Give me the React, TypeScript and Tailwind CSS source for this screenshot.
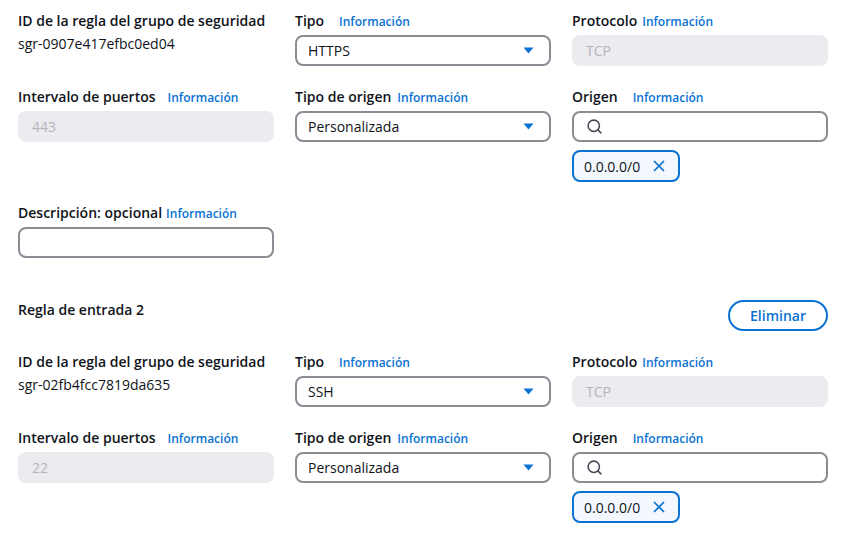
import { Search, X } from "lucide-react";

type LabelProps = { text: string; gap?: string };

function Label({ text, gap = "ml-2" }: LabelProps) {
  return (
    <div className="flex h-[22px] items-baseline">
      <span className="text-[14px] font-semibold leading-[22px] text-[#0f141a]">{text}</span>
      <span className={`${gap} text-[12px] font-semibold leading-[22px] text-[#0972d3]`}>Información</span>
    </div>
  );
}

function Caret() {
  return (
    <svg width="11" height="7" viewBox="0 0 11 7" className="text-[#0972d3]">
      <path d="M0.5 0.5 L10.5 0.5 L5.5 6.5 Z" fill="currentColor" />
    </svg>
  );
}

function Select({ value }: { value: string }) {
  return (
    <div className="mt-[3px] flex h-[31px] items-center justify-between rounded-lg border-2 border-[#8c8c94] bg-white pl-[11px] pr-[15px]">
      <span className="text-[14px] text-[#0f141a]">{value}</span>
      <Caret />
    </div>
  );
}

function Disabled({ value }: { value: string }) {
  return (
    <div className="mt-[3px] flex h-[31px] items-center rounded-lg bg-[#ebebf0] px-[14px]">
      <span className="text-[14px] text-[#b4b4bb]">{value}</span>
    </div>
  );
}

function SearchBox() {
  return (
    <div className="mt-[3px] flex h-[31px] items-center rounded-lg border-2 border-[#8c8c94] bg-white pl-[12px]">
      <Search size={17} strokeWidth={2.2} className="text-[#424650]" />
    </div>
  );
}

function Token() {
  return (
    <div className="mt-2 inline-flex h-8 items-center gap-[10px] rounded-lg border-2 border-[#0972d3] bg-[#f2f8fd] pl-[10px] pr-[10px]">
      <span className="text-[14px] text-[#0f141a]">0.0.0.0/0</span>
      <X size={18} strokeWidth={2.3} className="text-[#0972d3]" />
    </div>
  );
}

function IdCell({ id }: { id: string }) {
  return (
    <div>
      <div className="flex h-[22px] items-center">
        <span className="whitespace-nowrap text-[14px] font-semibold leading-[22px] text-[#0f141a]">
          ID de la regla del grupo de seguridad
        </span>
      </div>
      <div className="mt-[2px] text-[14px] leading-5 text-[#0f141a]">{id}</div>
    </div>
  );
}

function Rule({ id, tipo, port }: { id: string; tipo: string; port: string }) {
  return (
    <div className="grid grid-cols-3 gap-x-[21px] gap-y-5">
      <IdCell id={id} />
      <div>
        <Label text="Tipo" gap="ml-[15px]" />
        <Select value={tipo} />
      </div>
      <div>
        <Label text="Protocolo" gap="ml-[5px]" />
        <Disabled value="TCP" />
      </div>
      <div>
        <Label text="Intervalo de puertos" gap="ml-[12px]" />
        <Disabled value={port} />
      </div>
      <div>
        <Label text="Tipo de origen" gap="ml-[6px]" />
        <Select value="Personalizada" />
      </div>
      <div>
        <Label text="Origen" gap="ml-[15px]" />
        <SearchBox />
        <Token />
      </div>
    </div>
  );
}

export default function App() {
  return (
    <div
      className="min-h-[539px] w-[848px] bg-white pl-[18px] pr-5 pt-[10px]"
      style={{ fontFamily: '"Open Sans", "Noto Sans", sans-serif' }}
    >
      <Rule id="sgr-0907e417efbc0ed04" tipo="HTTPS" port="443" />

      <div className="mt-5 w-[256px]">
        <Label text="Descripción: opcional" gap="ml-1" />
        <div className="mt-[3px] h-[31px] rounded-lg border-2 border-[#8c8c94] bg-white" />
      </div>

      <div className="mt-[42px] flex items-start justify-between">
        <span className="text-[14px] font-semibold leading-5 text-[#0f141a]">Regla de entrada 2</span>
        <button
          type="button"
          className="h-[31px] w-[100px] rounded-full border-2 border-[#0972d3] text-[14px] font-semibold text-[#0972d3]"
        >
          Eliminar
        </button>
      </div>

      <div className="mt-5">
        <Rule id="sgr-02fb4fcc7819da635" tipo="SSH" port="22" />
      </div>
    </div>
  );
}
